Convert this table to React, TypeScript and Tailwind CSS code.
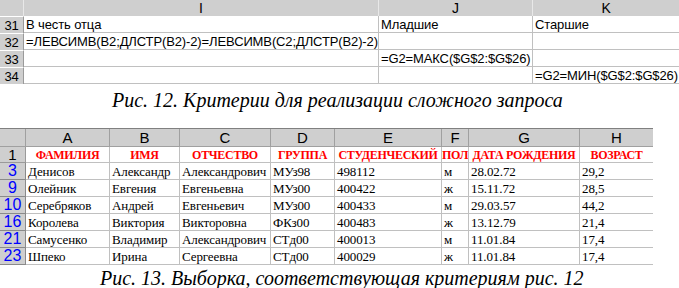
import React from "react";

const hdr = "bg-[#cfcfcf] flex items-center justify-center text-black";

const TopSheet = () => {
  const rows: { n: string; i: string; j: string; k: string }[] = [
    { n: "31", i: "В честь отца", j: "Младшие", k: "Старшие" },
    { n: "32", i: "=ЛЕВСИМВ(B2;ДЛСТР(B2)-2)=ЛЕВСИМВ(C2;ДЛСТР(B2)-2)", j: "", k: "" },
    { n: "33", i: "", j: "=G2=МАКС($G$2:$G$26)", k: "" },
    { n: "34", i: "", j: "", k: "=G2=МИН($G$2:$G$26)" },
  ];
  return (
    <div
      className="grid grid-cols-[24px_355px_154px_146px] text-[13px] leading-none tracking-[-0.12px]"
      style={{ fontFamily: '"Liberation Sans", Arial, sans-serif' }}
    >
      <div className={`${hdr} h-[16px] border-r border-[#e8e8e8]`} />
      <div className={`${hdr} h-[16px] border-r border-[#e8e8e8] text-[14px]`}>I</div>
      <div className={`${hdr} h-[16px] border-r border-[#e8e8e8] text-[14px]`}>J</div>
      <div className={`${hdr} h-[16px] text-[14px]`}>K</div>
      {rows.map((r) => (
        <React.Fragment key={r.n}>
          <div className={`${hdr} h-[17px] border-t border-white border-r border-r-[#9a9a9a]`}>{r.n}</div>
          <div className="h-[17px] border-b border-r border-[#c0c0c0] pl-[2px] flex items-center whitespace-nowrap">{r.i}</div>
          <div className="h-[17px] border-b border-r border-[#c0c0c0] pl-[2px] flex items-center whitespace-nowrap">{r.j}</div>
          <div className="h-[17px] border-b border-[#c0c0c0] pl-[2px] flex items-center whitespace-nowrap">{r.k}</div>
        </React.Fragment>
      ))}
    </div>
  );
};

const BottomSheet = () => {
  const cols = ["A", "B", "C", "D", "E", "F", "G", "H"];
  const heads = ["ФАМИЛИЯ", "ИМЯ", "ОТЧЕСТВО", "ГРУППА", "СТУДЕНЧЕСКИЙ", "ПОЛ", "ДАТА РОЖДЕНИЯ", "ВОЗРАСТ"];
  const data: string[][] = [
    ["3", "Денисов", "Александр", "Александрович", "МУз98", "498112", "м", "28.02.72", "29,2"],
    ["9", "Олейник", "Евгения", "Евгеньевна", "МУз00", "400422", "ж", "15.11.72", "28,5"],
    ["10", "Серебряков", "Андрей", "Евгеньевич", "МУз00", "400433", "м", "29.03.57", "44,2"],
    ["16", "Королева", "Виктория", "Викторовна", "ФКз00", "400483", "ж", "13.12.79", "21,4"],
    ["21", "Самусенко", "Владимир", "Александрович", "СТд00", "400013", "м", "11.01.84", "17,4"],
    ["23", "Шпеко", "Ирина", "Сергеевна", "СТд00", "400029", "ж", "11.01.84", "17,4"],
  ];
  const serif = { fontFamily: '"Liberation Serif", "Times New Roman", serif' };
  const sans = { fontFamily: '"Liberation Sans", Arial, sans-serif' };
  return (
    <div
      className="grid grid-cols-[26px_84px_70px_91px_64px_107px_27px_111px_73px] w-[653px] border-t border-[#808080] leading-none"
      style={serif}
    >
      <div className={`${hdr} h-[18px] border-r border-b border-[#a0a0a0]`} />
      {cols.map((c, idx) => (
        <div
          key={c}
          className={`${hdr} h-[18px] border-b border-[#a0a0a0] text-[15px] ${idx < 7 ? "border-r" : ""}`}
          style={sans}
        >
          {c}
        </div>
      ))}
      <div className={`${hdr} h-[16px] border-r border-b border-[#9a9a9a] text-[15px]`} style={sans}>1</div>
      {heads.map((h, idx) => (
        <div
          key={h}
          className={`h-[16px] border-b border-[#c0c0c0] flex items-center justify-center whitespace-nowrap overflow-hidden text-[12px] tracking-[-0.3px] font-bold text-[#ff0000] ${idx < 7 ? "border-r" : ""}`}
        >
          {h}
        </div>
      ))}
      {data.map((r) => (
        <React.Fragment key={r[0]}>
          <div
            className={`${hdr} h-[17px] border-r border-b border-[#8a8a8a] text-[16px] !text-[#0000ff]`}
            style={sans}
          >
            {r[0]}
          </div>
          {r.slice(1).map((v, idx) => (
            <div
              key={idx}
              className={`h-[17px] border-b border-[#c0c0c0] pl-[2px] flex items-center whitespace-nowrap overflow-hidden text-[13px] tracking-[-0.1px] text-black ${idx < 7 ? "border-r" : ""}`}
            >
              {v}
            </div>
          ))}
        </React.Fragment>
      ))}
    </div>
  );
};

export default function App() {
  const cap = { fontFamily: '"Liberation Serif", "Times New Roman", serif' };
  return (
    <div className="w-[679px] h-[288px] bg-white overflow-hidden">
      <TopSheet />
      <div className="h-[28px] pl-[112px] pt-[6px] italic text-[20px] leading-none text-black" style={cap}>
        Рис. 12. Критерии для реализации сложного запроса
      </div>
      <div className="h-[16px]" />
      <BottomSheet />
      <div className="pl-[100px] pt-[3px] italic text-[20px] leading-none text-black" style={cap}>
        Рис. 13. Выборка, соответствующая критериям рис. 12
      </div>
    </div>
  );
}
